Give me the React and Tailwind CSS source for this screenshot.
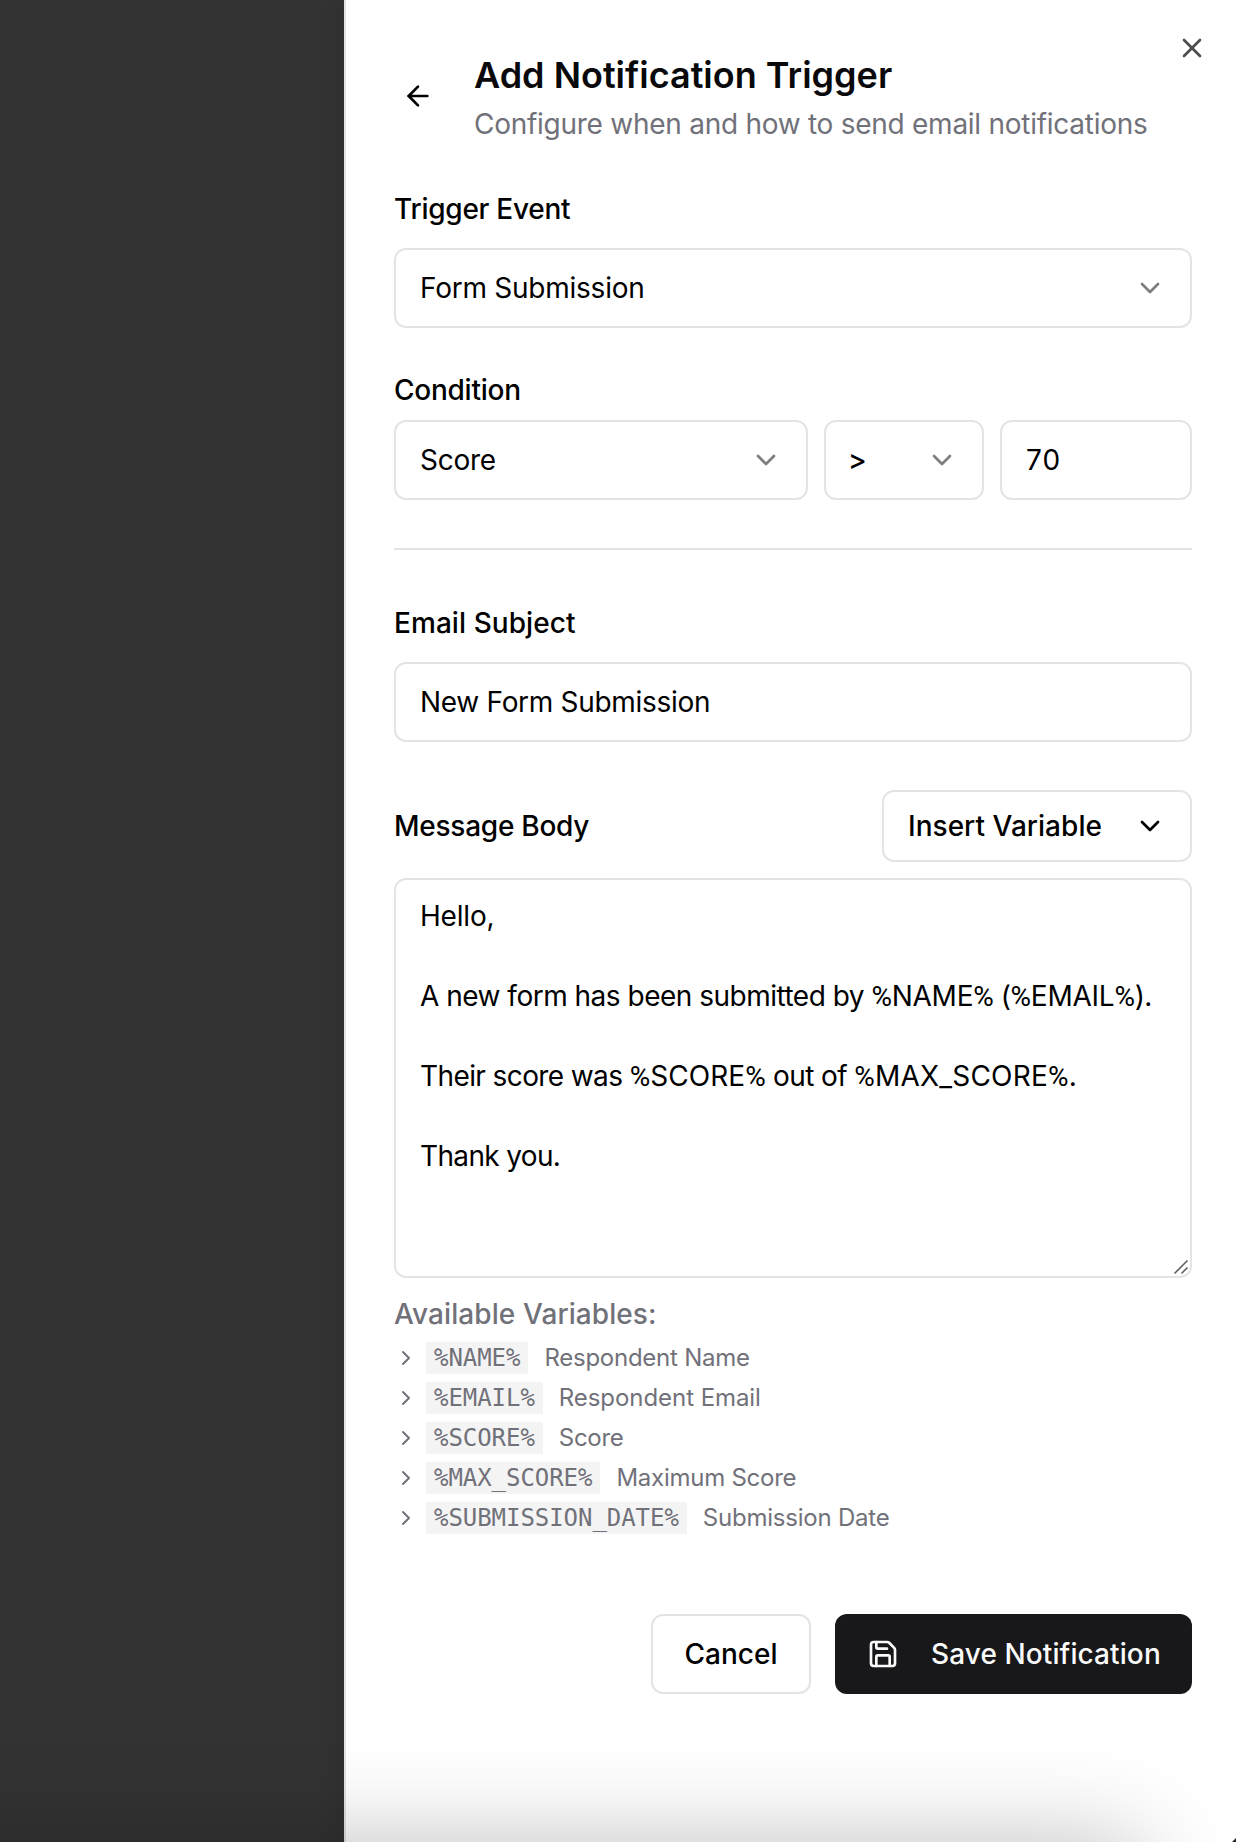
import { ArrowLeft, ChevronDown, ChevronRight, Save, X } from "lucide-react";

const variables = [
  ["%NAME%", "Respondent Name", "tracking-[-0.25px]"],
  ["%EMAIL%", "Respondent Email", "tracking-[-0.06px]"],
  ["%SCORE%", "Score", "tracking-[-0.3px]"],
  ["%MAX_SCORE%", "Maximum Score", "tracking-[-0.25px]"],
  ["%SUBMISSION_DATE%", "Submission Date", "tracking-[-0.22px]"],
];

const box = "rounded-[12px] border-2 border-[#e4e4e4] bg-white";

function Select({ value, className, valueClassName = "" }) {
  return (
    <button className={`${box} flex h-20 items-center justify-between px-6 text-left ${className}`}>
      <span className={valueClassName}>{value}</span>
      <ChevronDown size={32} className="text-black opacity-50" />
    </button>
  );
}

function Token({ name, tracking = "tracking-[-0.25px]" }) {
  return (
    <span className={tracking}>
      <span className="font-['Roboto',sans-serif] leading-none">%</span>
      {name}
      <span className="font-['Roboto',sans-serif] leading-none">%</span>
    </span>
  );
}

export default function App() {
  return (
    <div className="relative flex h-[1842px] w-[1236px] overflow-hidden bg-[#333333] font-['Inter',sans-serif] text-[28px] leading-10 tracking-[-0.25px] text-black">
      <div className="w-[344px] shrink-0" />
      <main className="relative flex w-[892px] shrink-0 flex-col border-l-2 border-[#e4e4e7] bg-white pt-[47px] pr-11 pl-12 shadow-[0_0_24px_rgba(0,0,0,0.12)]">
        <button className="absolute top-8 right-7 text-black opacity-70">
          <X size={32} />
        </button>

        <header className="flex items-center">
          <button className="flex w-20 items-center pt-px pl-2">
            <ArrowLeft size={32} />
          </button>
          <div>
            <h1 className="text-[36px] leading-[56px] font-semibold tracking-[0px] text-[#09090b]">
              Add Notification Trigger
            </h1>
            <p className="pt-px whitespace-nowrap tracking-[-0.265px] text-[#71717a]">
              Configure when and how to send email notifications
            </p>
          </div>
        </header>

        <label className="mt-[45px] font-medium">Trigger Event</label>
        <Select value="Form Submission" className="mt-[19px] w-full" />

        <label className="mt-[42px] font-medium">Condition</label>
        <div className="mt-[10px] flex gap-4">
          <Select value="Score" className="grow" />
          <Select value=">" className="w-40" valueClassName="-ml-[2px] font-medium" />
          <div className={`${box} flex h-20 w-48 items-center px-6 tracking-[1.2px]`}>70</div>
        </div>

        <hr className="mt-12 border-t-2 border-[#e4e4e4]" />

        <label className="mt-[53px] font-medium tracking-[0.07px]">Email Subject</label>
        <div className={`${box} mt-[19px] flex h-20 items-center px-6 tracking-[-0.3px]`}>
          New Form Submission
        </div>

        <div className="mt-12 flex items-center justify-between">
          <label className="font-medium tracking-[-0.25px]">Message Body</label>
          <button className={`${box} flex h-[72px] w-[310px] items-center justify-between px-6 font-medium tracking-[0.03px]`}>
            Insert Variable
            <ChevronDown size={32} />
          </button>
        </div>

        <div className={`${box} relative mt-4 h-[400px] px-6 py-4 tracking-[-0.5px] whitespace-nowrap`}>
          <p className="mb-10 h-10 tracking-[-0.2px]">Hello,</p>
          <p className="mb-10 h-10">
            A new form has been submitted by <Token name="NAME" /> (<Token name="EMAIL" />).
          </p>
          <p className="mb-10 h-10 tracking-[-0.6px]">
            Their score was <Token name="SCORE" tracking="tracking-[0.05px]" /> out of{" "}
            <Token name="MAX_SCORE" tracking="tracking-[0.2px]" />.
          </p>
          <p className="h-10 tracking-[-0.65px]">Thank you.</p>
          <svg
            className="absolute right-[1px] bottom-[1px]"
            width="16"
            height="16"
            viewBox="0 0 16 16"
            stroke="#606060"
            strokeWidth="1.6"
          >
            <path d="M1.5 14.5 14.5 1.5M8.5 14.5 14.5 8.5" />
          </svg>
        </div>

        <p className="mt-4 font-medium tracking-[0.09px] text-[#71717a]">Available Variables:</p>
        <ul className="mt-2 flex flex-col gap-2 text-[24px] leading-8 text-[#71717a]">
          {variables.map(([code, label, tracking]) => (
            <li key={code} className="flex items-center">
              <ChevronRight size={24} className="mr-2" />
              <code className="mr-4 bg-[#f4f4f4] px-2 font-['DejaVu_Sans_Mono',monospace] tracking-[-0.05px]">
                {code}
              </code>
              <span className={tracking}>{label}</span>
            </li>
          ))}
        </ul>

        <footer className="mt-20 flex justify-end gap-6 font-medium">
          <button className={`${box} h-20 w-40 tracking-normal`}>Cancel</button>
          <button className="flex h-20 w-[357px] items-center rounded-[12px] bg-[#18181b] pl-8 tracking-[0.1px] text-[#fafafa]">
            <Save size={32} className="mr-8" />
            Save Notification
          </button>
        </footer>
      </main>

      <div className="pointer-events-none absolute top-[1842px] right-[96px] h-[300px] w-[1400px] shadow-[0_0_90px_rgba(0,0,0,0.25)]" />
      <div className="pointer-events-none absolute right-0 bottom-0 h-[4px] w-[4px] bg-[#222222] [clip-path:polygon(100%_0,100%_100%,0_100%)]" />
    </div>
  );
}
